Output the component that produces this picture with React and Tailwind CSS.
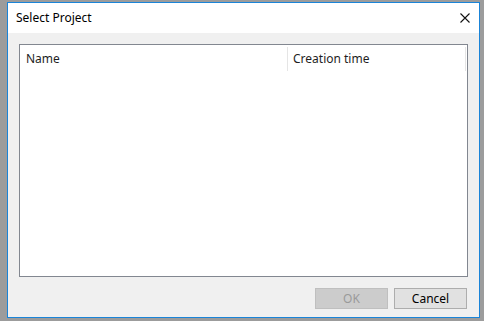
export default function App() {
  return (
    <div
      className="w-[484px] h-[321px] bg-[#9c9c9c] pt-[2px] pl-[7px] pr-[4px] pb-[3px] flex"
      style={{ fontFamily: '"Noto Sans", "Open Sans", sans-serif' }}
    >
      <div className="flex-1 flex flex-col border border-[#1a84d8] bg-[#f0f0f0]">
        {/* title bar */}
        <div className="h-[31px] bg-white flex items-center justify-between pl-[8px] pr-[9px]">
          <span className="text-[12px] text-black leading-none">Select Project</span>
          <svg width="10" height="10" viewBox="0 0 10 10">
            <path d="M0.5 0.5 L9.5 9.5 M9.5 0.5 L0.5 9.5" stroke="#111" strokeWidth="1.1" />
          </svg>
        </div>

        {/* body */}
        <div className="flex-1 flex flex-col px-[11px] pt-[11px] pb-[8px]">
          <div className="h-[233px] border border-[#828790] bg-white flex flex-col">
            <div className="h-[26px] flex text-[12px] text-[#1e1e1e]">
              <div className="w-[268px] flex items-center pl-[6px] border-r border-[#e5e5e5] mt-[2px]">
                Name
              </div>
              <div className="w-[178px] flex items-center pl-[5px] border-r border-[#e5e5e5] mt-[2px]">
                Creation time
              </div>
            </div>
          </div>

          <div className="flex justify-end gap-[6px] mt-[11px] mr-[1px]">
            <button className="w-[73px] h-[21px] bg-[#cccccc] border border-[#bfbfbf] text-[12px] text-[#9a9a9a] leading-none">
              OK
            </button>
            <button className="w-[73px] h-[21px] bg-[#e1e1e1] border border-[#adadad] text-[12px] text-black leading-none">
              Cancel
            </button>
          </div>
        </div>
      </div>
    </div>
  );
}
